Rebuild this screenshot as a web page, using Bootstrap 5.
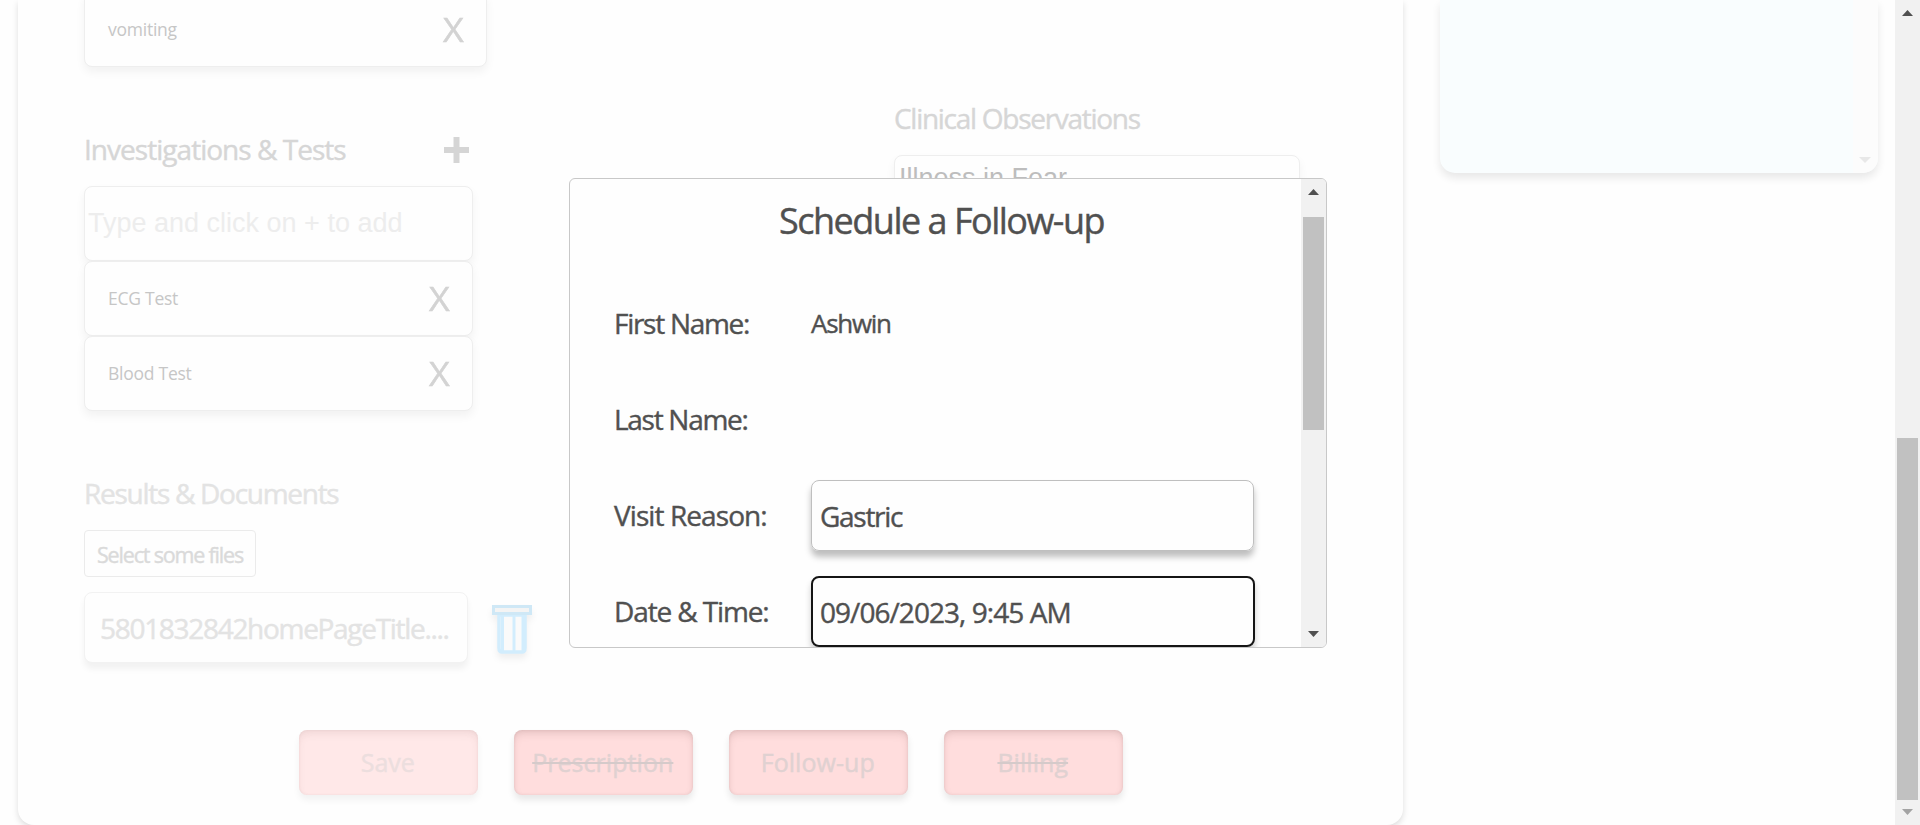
<!DOCTYPE html>
<html lang="en">
<head>
<meta charset="utf-8">
<title>Consultation</title>
<link href="https://cdn.jsdelivr.net/npm/bootstrap@5.3.0/dist/css/bootstrap.min.css" rel="stylesheet">
<style>
body{width:1920px;height:825px;overflow:hidden;background:#fefefe;color:#505050;font-family:"Open Sans","Noto Sans",sans-serif;font-size:28px;letter-spacing:-1.28px;-webkit-text-stroke:.4px}
.record{width:1385px;height:825px;margin-left:18px;background:#fefefe;border-radius:0 0 16px 16px;box-shadow:0 3px 6px rgba(0,0,0,.13)}
.upper{height:730px}
.left-col{width:470px;margin-left:66px}
.right-col{width:406px;margin-left:340px;padding-top:98px}
.heading{line-height:40px;height:40px;width:385px;white-space:nowrap;color:#d6d6d6}
.investigations{margin-top:62px;letter-spacing:-.97px}
.pale{color:#e3e3e3}
.results{margin-top:62px}
.field{border:1px solid #eee;border-radius:8px;background:#fefefe;box-shadow:0 5px 10px rgba(0,0,0,.05)}
.entry{height:75px;width:389px;padding:0 24px 0 23px;font-size:17.5px;color:#c6c6c6;letter-spacing:-.25px;-webkit-text-stroke:0}
.entry.symptom{width:403px;margin-top:-8px}
.entry b{font-size:32px;font-weight:400;color:#d3d3d3;letter-spacing:0;transform:scaleX(1.12);-webkit-text-stroke:.5px}
.typed{height:75px;width:389px;font:27px/73px "Liberation Sans",sans-serif;letter-spacing:0;color:#ededed;padding-left:3px;margin-top:17px;white-space:nowrap;-webkit-text-stroke:0}
.observed{height:150px;margin-top:17px;padding:6px 0 0 4px;font:27px/32px "Liberation Sans",sans-serif;letter-spacing:0;color:#bdbdbd;-webkit-text-stroke:0}
.pick{height:47px;width:172px;border:1px solid #ebebeb;border-radius:4px;font-size:21.5px;line-height:47px;padding-left:12px;color:#dadada;margin-top:17px;letter-spacing:-1.18px;white-space:nowrap}
.file-row{margin-top:15px}
.file{width:384px;height:71px;line-height:71px;padding-left:15px;border-color:#f2f2f2;box-shadow:0 6px 6px rgba(0,0,0,.05);letter-spacing:-1.3px}
.trash{margin:13px 0 0 24px;filter:drop-shadow(0 5px 3px rgba(0,0,0,.06))}
.actions{gap:36.4px;margin-left:281px}
.action{width:178.6px;height:65px;line-height:65px;text-align:center;border-radius:8px;background:#ffdddd;color:#e0d1d1;font-size:25px;letter-spacing:.05px;text-indent:-1px;box-shadow:inset 0 5px 8px -2px rgba(120,80,80,.2),inset 0 0 3px rgba(120,80,80,.15),0 5px 7px rgba(0,0,0,.09)}
.action.off{background:#ffe8e8;color:#ecdede;box-shadow:inset 0 5px 8px -2px rgba(120,80,80,.12),inset 0 0 3px rgba(120,80,80,.08),0 5px 7px rgba(0,0,0,.05)}
.action s{text-decoration-color:#d5caca;text-decoration-thickness:2px}
.notes{width:438px;height:173px;margin-left:37px;border-radius:0 0 15px 15px;background:#f9fdfe;box-shadow:0 5px 9px rgba(0,0,0,.09);overflow:hidden}
.rail{width:25px;background:#f1f1f1;flex:none}
.rail.faint{background:#fcfcfc}
.rail svg{display:block}
.thumb{width:21px;background:#c1c1c1;margin-left:2px}
.page-thumb{height:362px}
.dialog-thumb{height:213px}
.dialog-box{position:absolute;left:569px;top:178px;width:758px;height:470px;border:1px solid #c8c8c8;border-radius:6px;background:#fefefe;overflow:hidden}
.title{font-size:36px;height:96px;line-height:84px;padding-left:209px;letter-spacing:-1.5px}
.line{height:96px;padding-left:45px}
.line>label{width:196px;white-space:nowrap;margin-left:-1px;padding-right:1px;flex:none}
.line.reason>label{letter-spacing:-.92px}
.line.when>label{letter-spacing:-1.12px}
.value{font-size:26px;margin-left:1px}
.box{width:443px;height:71px;line-height:71px;padding-left:8px;margin-left:1px;border:1px solid #bfbfbf;border-radius:8px;box-shadow:0 6px 6px rgba(0,0,0,.25);white-space:nowrap}
.box.focus{border:0;padding-left:9px;line-height:72px;outline:2.5px solid #151515;outline-offset:-2.5px;box-shadow:0 5px 6px rgba(0,0,0,.2);width:443.5px;letter-spacing:-.95px}
</style>
</head>
<body class="d-flex">
<main class="record d-flex flex-column flex-shrink-0">
  <div class="d-flex upper">
    <section class="left-col flex-shrink-0">
      <div class="field entry symptom d-flex justify-content-between align-items-center"><span>vomiting</span><b>X</b></div>
      <div class="heading investigations d-flex align-items-center justify-content-between"><span>Investigations &amp; Tests</span>
        <svg width="25" height="28"><path d="M0 12h25v6H0zM9.500 2h6v26h-6z" fill="#d5d5d5"/></svg></div>
      <div class="field typed">Type and click on + to add</div>
      <div class="field entry d-flex justify-content-between align-items-center"><span>ECG Test</span><b>X</b></div>
      <div class="field entry d-flex justify-content-between align-items-center"><span>Blood Test</span><b>X</b></div>
      <div class="heading pale results">Results &amp; Documents</div>
      <div class="pick">Select some files</div>
      <div class="d-flex file-row">
        <div class="field file pale">5801832842homePageTitle....</div>
        <svg class="trash" width="40" height="60" viewBox="0 0 40 60"><path d="M7 10v33q0 4 3 4h20q3 0 3-4V10z" fill="#fafafa" stroke="#d2edfd" stroke-width="3.500"/><path d="M10.500 10v37M22 10v37M31 10v37" fill="none" stroke="#d2edfd" stroke-width="3"/><path d="M1.500 1.500h37v7h-37z" fill="#f4f4f4" stroke="#cfe8f6" stroke-width="3"/></svg>
      </div>
    </section>
    <section class="right-col">
      <div class="heading">Clinical Observations</div>
      <div class="field observed">Illness in Fear</div>
    </section>
  </div>
  <div class="d-flex actions">
    <div class="action off">Save</div><div class="action"><s>Prescription</s></div><div class="action">Follow-up</div><div class="action"><s>Billing</s></div>
  </div>
</main>
<aside class="notes d-flex justify-content-end flex-shrink-0">
  <div class="rail faint d-flex align-items-end"><svg width="25" height="16"><path d="M6 0h12l-6 6z" fill="#e8e8e8"/></svg></div>
</aside>
<div class="rail ms-auto">
  <svg width="25" height="438"><path d="M7 16h11l-5.500-6z" fill="#505050"/></svg>
  <div class="thumb page-thumb"></div>
  <svg width="25" height="25"><path d="M7 9h11l-5.500 6z" fill="#a3a3a3"/></svg>
</div>
<div class="dialog-box d-flex">
  <div class="flex-grow-1">
    <div class="title">Schedule a Follow-up</div>
    <div class="line d-flex align-items-center"><label>First Name:</label><span class="value">Ashwin</span></div>
    <div class="line d-flex align-items-center"><label>Last Name:</label></div>
    <div class="line reason d-flex align-items-center"><label>Visit Reason:</label><div class="box">Gastric</div></div>
    <div class="line when d-flex align-items-center"><label>Date &amp; Time:</label><div class="box focus">09/06/2023, 9:45 AM</div></div>
  </div>
  <div class="rail">
    <svg width="25" height="38"><path d="M7 16h11l-5.500-6z" fill="#505050"/></svg>
    <div class="thumb dialog-thumb"></div>
    <svg width="25" height="218"><path d="M7 201h11l-5.500 6z" fill="#505050"/></svg>
  </div>
</div>
<script src="https://cdn.jsdelivr.net/npm/bootstrap@5.3.0/dist/js/bootstrap.bundle.min.js"></script>
</body>
</html>
